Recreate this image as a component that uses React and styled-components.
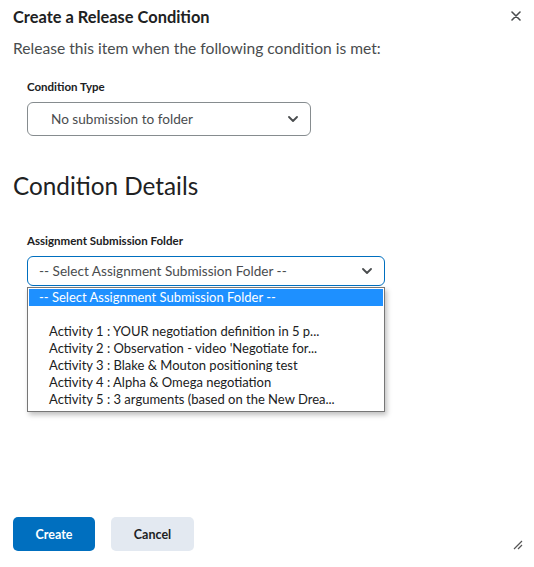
import React from "react";
import styled, { createGlobalStyle } from "styled-components";

const Global = createGlobalStyle`
  html, body { margin: 0; padding: 0; background: #fff; }
  body { font-family: Lato, "Noto Sans", sans-serif; color: #202122; }
  * { box-sizing: border-box; }
`;

const Dialog = styled.div`
  width: 534px;
  height: 567px;
  position: relative;
  padding: 0 13px;
  display: flex;
  flex-direction: column;
`;

const Header = styled.div`
  display: flex;
  align-items: center;
  justify-content: space-between;
  height: 32px;
`;

const Title = styled.h1`
  margin: 0;
  font-size: 16.4px;
  font-weight: 700;
  color: #202122;
`;

const Close = styled.button`
  border: 0;
  background: none;
  padding: 0;
  width: 12px;
  height: 12px;
  margin-right: -1px;
  display: flex;
  align-items: center;
  justify-content: center;
`;

const Description = styled.p`
  margin: 6px 0 0;
  font-size: 15.6px;
  line-height: 20px;
  color: #494c4e;
`;

const Field = styled.div`
  padding-left: 14px;
  margin-top: ${(p) => p.$top}px;
  position: relative;
`;

const Label = styled.div`
  font-size: 11.5px;
  font-weight: 700;
  color: #202122;
  line-height: 14px;
`;

const Select = styled.div`
  margin-top: 8px;
  width: ${(p) => p.$w}px;
  height: ${(p) => p.$h}px;
  border: ${(p) => (p.$focus ? "1.5px solid #006fbf" : "1px solid #868c8f")};
  border-radius: 6px;
  display: flex;
  align-items: center;
  justify-content: space-between;
  padding: 0 12px 0 ${(p) => p.$pad}px;
  font-size: 13.6px;
  color: #494c4e;
  background: #fff;
`;

const Heading = styled.h2`
  margin: 35px 0 0;
  font-size: 24.3px;
  font-weight: 400;
  line-height: 30px;
  color: #202122;
`;

const Menu = styled.ul`
  position: absolute;
  left: 14px;
  top: 53px;
  width: 358px;
  margin: 0;
  padding: 1px 1px 3px;
  list-style: none;
  background: #fff;
  border: 1px solid #767676;
  box-shadow: 2px 3px 5px rgba(0, 0, 0, 0.25);
  font-size: 13px;
  color: #202122;
  z-index: 2;
`;

const Option = styled.li`
  height: 17px;
  line-height: 17px;
  padding-left: ${(p) => p.$indent}px;
  white-space: nowrap;
  background: ${(p) => (p.$active ? "#1e90ff" : "transparent")};
  color: ${(p) => (p.$active ? "#fff" : "#202122")};
`;

const Footer = styled.div`
  margin-top: auto;
  margin-bottom: 16px;
  display: flex;
  gap: 16px;
`;

const Button = styled.button`
  width: ${(p) => p.$w}px;
  height: 34px;
  border: 0;
  border-radius: 5px;
  font-family: Lato, "Noto Sans", sans-serif;
  font-size: 12.5px;
  font-weight: 700;
  background: ${(p) => (p.$primary ? "#006fbf" : "#e3e9f1")};
  color: ${(p) => (p.$primary ? "#fff" : "#202122")};
`;

const Resize = styled.svg`
  position: absolute;
  right: 11px;
  bottom: 17px;
`;

const Chevron = () => (
  <svg width="10" height="6" viewBox="0 0 10 6">
    <path d="M1 1 L5 5 L9 1" fill="none" stroke="#494c4e" strokeWidth="1.8" strokeLinecap="round" strokeLinejoin="round" />
  </svg>
);

export default function App() {
  const items = [
    "Activity 1 : YOUR negotiation definition in 5 p...",
    "Activity 2 : Observation - video 'Negotiate for...",
    "Activity 3 : Blake & Mouton positioning test",
    "Activity 4 : Alpha & Omega negotiation",
    "Activity 5 : 3 arguments (based on the New Drea...",
  ];
  return (
    <>
      <Global />
      <Dialog>
        <Header>
          <Title>Create a Release Condition</Title>
          <Close aria-label="Close">
            <svg width="10" height="10" viewBox="0 0 10 10">
              <path d="M1 1 L9 9 M9 1 L1 9" stroke="#494c4e" strokeWidth="1.6" strokeLinecap="round" />
            </svg>
          </Close>
        </Header>
        <Description>Release this item when the following condition is met:</Description>
        <Field $top={22}>
          <Label>Condition Type</Label>
          <Select $w={284} $h={34} $pad={23}>
            <span>No submission to folder</span>
            <Chevron />
          </Select>
        </Field>
        <Heading>Condition Details</Heading>
        <Field $top={33}>
          <Label>Assignment Submission Folder</Label>
          <Select $w={358} $h={30} $pad={11} $focus>
            <span>-- Select Assignment Submission Folder --</span>
            <Chevron />
          </Select>
          <Menu>
            <Option $active $indent={10}>-- Select Assignment Submission Folder --</Option>
            <Option $indent={20}></Option>
            {items.map((t) => (
              <Option key={t} $indent={20}>{t}</Option>
            ))}
          </Menu>
        </Field>
        <Footer>
          <Button $primary $w={82}>Create</Button>
          <Button $w={83}>Cancel</Button>
        </Footer>
        <Resize width="10" height="10" viewBox="0 0 10 10">
          <path d="M1 9 L9 1 M5 9 L9 5" stroke="#555" strokeWidth="1.2" />
        </Resize>
      </Dialog>
    </>
  );
}
